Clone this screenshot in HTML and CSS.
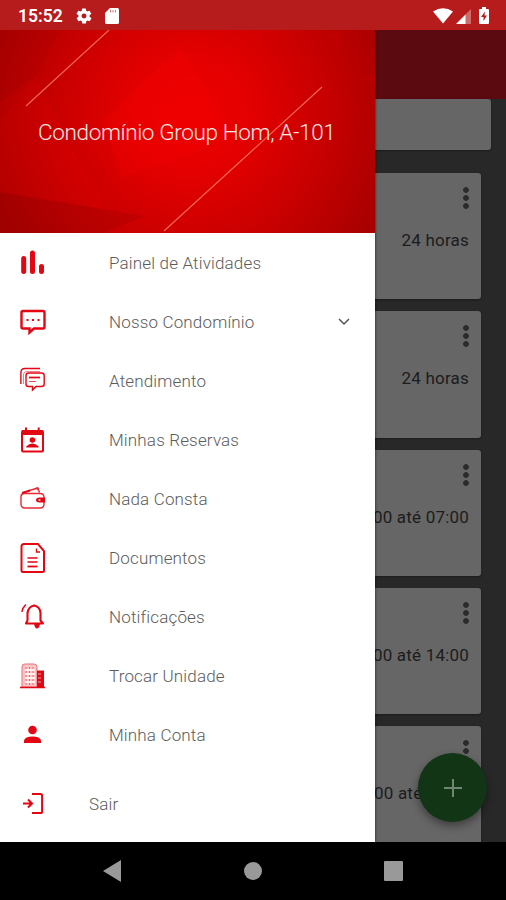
FILE: index.html
```html
<!DOCTYPE html>
<html lang="pt-BR">
<head>
  <meta charset="UTF-8">
  <meta name="viewport" content="width=device-width, initial-scale=1.0">
  <title>Condomínio</title>
  <link rel="stylesheet" href="styles.css">
</head>
<body>
  <header class="status-bar">
    <span class="clock">15:52</span>
    <svg class="gear" width="18" height="18" viewBox="0 0 24 24"><path fill="#fff" d="M19.4 13a7.5 7.5 0 0 0 0-2l2.1-1.7c.2-.1.3-.4.1-.6l-2-3.5c-.1-.2-.4-.3-.6-.2l-2.5 1a7.300 7.300 0 0 0-1.700-1l-.4-2.600c0-.3-.2-.4-.5-.4h-4c-.2 0-.4.200-.5.400l-.4 2.700c-.6.200-1.200.600-1.700 1l-2.500-1c-.2-.1-.5 0-.6.200l-2 3.500c-.1.200-.1.400.1.600L4.600 11a7.500 7.500 0 0 0 0 2l-2.100 1.700c-.2.100-.3.400-.1.600l2 3.500c.1.200.4.300.6.200l2.500-1c.5.400 1.100.700 1.700 1l.4 2.600c0 .200.200.400.500.400h4c.2 0 .5-.2.500-.4l.4-2.600c.6-.3 1.200-.6 1.700-1l2.500 1c.2.100.5 0 .6-.2l2-3.500c.1-.2.100-.5-.1-.6zM12 15.300a3.300 3.300 0 1 1 0-6.600 3.300 3.300 0 0 1 0 6.600z"/></svg>
    <svg class="sd" width="14" height="16" viewBox="0 0 14 16"><path fill="#fff" d="M5 0h7.500Q14 0 14 1.500v13q0 1.500-1.500 1.500h-11Q0 16 0 14.500V5z"/><path stroke="#b71c1c" d="M5.500 2v2.500M8 2v2.500M10.500 2v2.500" opacity=".6"/></svg>
    <span class="spacer"></span>
    <svg width="20" height="16" viewBox="0 0 20 16"><path fill="#fff" d="M0 3.500Q10-3 20 3.500L10 15.500z"/></svg>
    <svg class="signal" width="15" height="15" viewBox="0 0 15 15"><path fill="#fff" opacity=".35" d="M15 0v15H9V6z"/><path fill="#fff" d="M9.500 5.500V15H0z"/></svg>
    <svg class="battery" width="10" height="17" viewBox="0 0 10 17"><path fill="#fff" d="M3 0h4v2h2q1 0 1 1v13q0 1-1 1H1q-1 0-1-1V3q0-1 1-1h2z"/><path fill="#b71c1c" d="M6 4.500 2 10h2.500v4L8 8.500H5.500z"/></svg>
  </header>

  <main class="screen">
    <div class="toolbar"></div>
    <div class="list">
      <div class="card filter"></div>
      <div class="card"><i class="dots"></i><p>24 horas</p></div>
      <div class="card"><i class="dots"></i><p>24 horas</p></div>
      <div class="card"><i class="dots"></i><p>00 até 07:00</p></div>
      <div class="card"><i class="dots"></i><p>00 até 14:00</p></div>
      <div class="card"><i class="dots"></i><p class="short">00 até</p></div>
    </div>
    <button class="fab">
      <svg width="18" height="18" viewBox="0 0 18 18"><path stroke="#718571" stroke-width="2" d="M9 0v18M0 9h18"/></svg>
    </button>

    <nav class="drawer">
      <div class="drawer-header">
        <svg class="header-art" width="375" height="203" viewBox="0 0 375 203">
          <path fill="#800" opacity=".12" d="M0 0h60L35 48 0 90z"/>
          <path fill="#f00" opacity=".12" d="M0 72l35-25 38 74 35 59L0 162z"/>
          <path fill="#800" opacity=".2" d="M0 162l145 24-42 17H0z"/>
          <path fill="#f00" opacity=".2" d="M102 90l80-72 50 90-110 40z"/>
          <path fill="#f00" opacity=".1" d="M330 5l12-5-5 17zM362 49l13-3v7z"/>
          <path stroke="#f6785f" stroke-width="1.200" opacity=".85" d="M26 76L109 0M164 201L322 57"/>
        </svg>
        <h1>Condomínio Group Hom, A-101</h1>
      </div>
      <ul class="menu">
        <li>
          <svg class="icon" viewBox="0 0 26 30"><path stroke="#e30613" stroke-width="5" stroke-linecap="round" d="M3.700 10.500v13M12.500 5v18.500M21.500 18.500v5"/></svg>
          <span>Painel de Atividades</span>
        </li>
        <li>
          <svg class="icon" viewBox="0 0 26 30"><path class="line" stroke-width="2.400" d="M3 4h20q1.500 0 1.500 1.500V20q0 1.500-1.500 1.500H14l-4.500 4v-4H3q-1.500 0-1.500-1.500V5.500Q1.500 4 3 4z"/><path class="line" stroke-width="1.800" d="M6.500 13h2m3.500 0h2m3.500 0h2"/></svg>
          <span>Nosso Condomínio</span>
          <svg class="chevron" width="12" height="8" viewBox="0 0 12 8"><path fill="none" stroke="#555" stroke-width="1.500" d="M1 1l5 5 5-5"/></svg>
        </li>
        <li>
          <svg class="icon" viewBox="0 0 26 30"><path class="line" stroke-width="1.400" d="M20 2.500H5Q.9 2.500.9 6.500V18"/><path class="line" stroke-width="1" opacity=".5" d="M3.500 18V8.500q0-3 3-3H20"/><path class="line" stroke-width="1.400" d="M8.500 7h13q2.700 0 2.700 2.700V18q0 2.500-2.700 2.500H16L12.500 24v-3.500h-4Q6 20.500 6 18V9.700Q6 7 8.500 7z"/><path class="line" stroke-width="1.700" d="M9 11.500h11"/><path class="line" opacity=".7" d="M9 15.500h7"/></svg>
          <span>Atendimento</span>
        </li>
        <li>
          <svg class="icon" viewBox="0 0 26 30"><path class="line" stroke-width="2" d="M3 6h19q1 0 1 1v18.500q0 1-1 1H3q-1 0-1-1V7q0-1 1-1zM6 2.500v4M18.700 2.500v4"/><path class="fill" d="M2 5h21v5H2zM6.200 22.500v-1q3-3 6.200-3t6.200 3v1z"/><circle class="fill" cx="12.400" cy="15" r="2.800"/></svg>
          <span>Minhas Reservas</span>
        </li>
        <li>
          <svg class="icon" viewBox="0 0 26 30"><path class="line" stroke-width="1.400" opacity=".85" d="M4.500 9.500H20q4 0 4 4V20q0 4-4 4H5q-4 0-4-4v-7.500Q1 10 4.500 9zM8 7l9-3 1 2M13 5.500l5-1.500 1.500 4.500"/><path class="line" stroke-width="2" d="M2 9l8-2.500"/><path class="fill" d="M25 13.500v5h-5.500q-3.500 0-3.500-2.500t3.500-2.500z"/><circle cx="19.500" cy="16" r="1" fill="#fff"/></svg>
          <span>Nada Consta</span>
        </li>
        <li>
          <svg class="icon" viewBox="0 0 26 30"><path class="line" stroke-width="2" d="M4 1h14l6 7v19.500q0 1.500-1.500 1.500H3Q1.500 29 1.500 27.500v-24Q1.500 1 4 1z"/><path class="line" stroke-width="1.400" d="M16.500 5.500v3.500H20M7.500 15h10M7.500 19h10"/><path class="line" stroke-width="1.800" d="M7.500 23.500h10"/></svg>
          <span>Documentos</span>
        </li>
        <li>
          <svg class="icon" viewBox="0 0 26 30"><path class="line" stroke-width="2.100" stroke-linejoin="round" d="M6 21.500h17l-2.500-3v-7.500Q20 4.500 14 3.500 8.500 4.500 7.500 11v7.500zM14 3.500v-1"/><path class="line" stroke-width="1.500" d="M2 10q0-2.500 1.500-4.500M3.500 6q.5-2 2.500-3.500"/><path class="fill" d="M14 22h6q-1 4.500-3 4.500t-3-4.500z"/></svg>
          <span>Notificações</span>
        </li>
        <li>
          <svg class="icon" viewBox="0 0 26 30"><path fill="#f9c5c7" stroke="#e57378" d="M2 26V6q0-3 3-3h9q3 0 3 3v20z"/><path stroke="#fff" stroke-width="1.700" d="M5 9h10M5 13h10M5 17h10M5 21h10"/><path stroke="#e96a70" stroke-dasharray="2 2" d="M6 6v18M9.500 6v18M13 6v18"/><path class="fill" d="M17 9.500h7V26h-7z"/><path stroke="#f9a5aa" d="M18 13h3M18 17h3M18 21h3"/><path class="line" stroke-width="1.500" d="M0 26.500h25"/></svg>
          <span>Trocar Unidade</span>
        </li>
        <li>
          <svg class="icon" viewBox="0 0 26 30"><circle class="fill" cx="12.500" cy="10" r="4.300"/><path class="fill" d="M4 23v-2.500q1-4 8.500-4t8.500 4V23z"/></svg>
          <span>Minha Conta</span>
        </li>
        <li class="logout">
          <svg class="icon" viewBox="0 0 26 30"><path class="line" stroke-width="2" d="M12 5h8.500q1.600 0 1.600 1.600v15.800q0 1.600-1.600 1.600H12M3 14.500h9M8 10.500l4 4-4 4"/></svg>
          <span>Sair</span>
        </li>
      </ul>
    </nav>
  </main>

  <footer class="nav-bar">
    <svg width="18" height="22" viewBox="0 0 18 22"><path fill="#999" d="M0 11L18 0v22z"/></svg>
    <svg width="18" height="18" viewBox="0 0 18 18"><circle cx="9" cy="9" r="9" fill="#999"/></svg>
    <svg width="19" height="20" viewBox="0 0 19 20"><rect width="19" height="20" rx="1" fill="#999"/></svg>
  </footer>
</body>
</html>
```

FILE: styles.css
```css
* {
  box-sizing: border-box;
}
body {
  margin: 0;
  width: 506px;
  height: 900px;
  display: flex;
  flex-direction: column;
  font-family: Roboto, sans-serif;
  background: #000;
  overflow: hidden;
}
svg {
  display: block;
  flex: none;
}
.status-bar {
  height: 30px;
  flex: none;
  display: flex;
  align-items: center;
  padding: 1px 17px 0 18px;
  background: #b71c1c;
  color: #fff;
}
.clock {
  width: 44px;
  font-size: 17.5px;
  font-weight: 600;
  white-space: nowrap;
}
.gear {
  margin-left: 13px;
}
.sd {
  margin-left: 12px;
}
.spacer {
  flex: 1;
}
.signal {
  margin: 1px 8px 0 3px;
}
.screen {
  position: relative;
  height: 812px;
  flex: none;
  overflow: hidden;
  background: #282828;
}
.toolbar {
  height: 69px;
  background: #5b0b10;
}
.list {
  padding-right: 25px;
}
.card {
  height: 126.3px;
  margin-bottom: 12px;
  padding: 14px 12px 0 0;
  border-radius: 3px;
  background: #666;
  box-shadow: 0 1px 2px #1c1c1c;
  display: flex;
  flex-direction: column;
  align-items: flex-end;
}
.card p {
  margin: 19px 0 0;
  font-size: 17px;
  line-height: 24px;
  letter-spacing: 0.2px;
  color: #1c1c1c;
  white-space: nowrap;
}
.card .short {
  width: 95px;
}
.filter {
  height: 51px;
  margin: 0 -10px 23px 0;
}
.dots {
  width: 6px;
  height: 22px;
  background: radial-gradient(circle, #2b2b2b 2.5px, transparent 3.2px) 0 -1px / 6px 8px;
}
.fab {
  position: absolute;
  right: 19px;
  bottom: 20px;
  width: 69px;
  height: 69px;
  padding: 0;
  border: 0;
  border-radius: 50%;
  background: #123516;
  box-shadow: 0 4px 8px rgba(0, 0, 0, 0.4);
  display: flex;
  align-items: center;
  justify-content: center;
}
.drawer {
  position: absolute;
  top: 0;
  left: 0;
  width: 375px;
  height: 812px;
  background: #fff;
  box-shadow: 0 0 3px rgba(0, 0, 0, 0.7);
}
.drawer-header {
  position: relative;
  height: 203px;
  display: flex;
  align-items: center;
  padding-left: 38px;
  background: radial-gradient(circle at 190px 85px, #ed0000 0, #e50000 55px, #c80000 135px, #a80000 210px, #990000 270px);
}
.header-art {
  position: absolute;
  top: 0;
  left: 0;
  fill: none;
}
.drawer-header h1 {
  position: relative;
  margin: 1px 0 0;
  font-size: 22.5px;
  font-weight: 350;
  letter-spacing: -0.36px;
  color: #ffe8e6;
  white-space: nowrap;
}
.menu {
  list-style: none;
  margin: 0;
  padding: 0;
}
.menu li {
  height: 59px;
  display: flex;
  align-items: center;
  padding: 0 25px 0 20px;
  font-size: 17px;
  font-weight: 300;
  letter-spacing: 0.16px;
  color: #5c5c5c;
}
.menu li span {
  flex: 1;
  margin-left: 63px;
}
.menu .logout {
  height: 79px;
}
.menu .logout span {
  margin-left: 43px;
}
.icon {
  width: 26px;
  height: 30px;
  fill: none;
}
.line {
  fill: none;
  stroke: #e30613;
}
.fill {
  fill: #e30613;
}
.nav-bar {
  height: 58px;
  flex: none;
  display: flex;
  align-items: center;
  justify-content: space-between;
  padding: 0 103px;
  background: #000;
}
```
